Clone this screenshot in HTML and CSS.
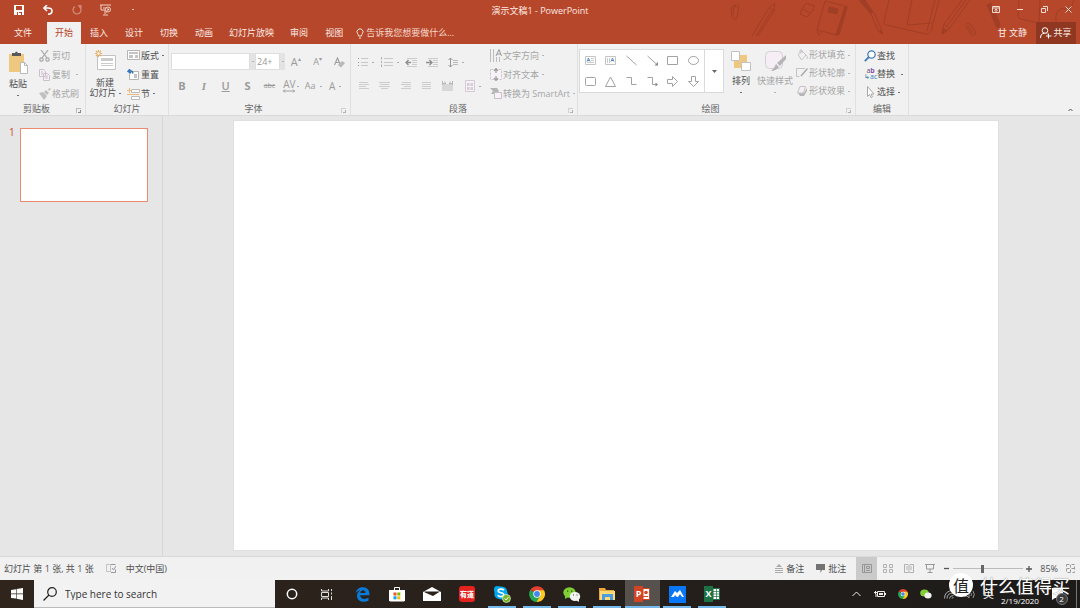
FILE: index.html
```html
<!DOCTYPE html>
<html lang="zh-CN">
<head>
<meta charset="utf-8">
<title>演示文稿1 - PowerPoint</title>
<link rel="stylesheet" href="styles.css">
</head>
<body>
<header class="header">
  <svg class="doodles" width="380" height="44" viewBox="0 0 380 44" fill="none" stroke="#a03e26" stroke-width="1" aria-hidden="true">
    <path d="M31 8l1 9q2 4 5 1l2-12q-3-3-5 0l-1 9M31 8q3-4 6 0"/>
    <path d="M52 36L69 8l6-5-1 8-16 25M56 36L72 10M70 8l4 3"/>
    <path d="M101 11l5-8 8 3-1 5-6 6-7-3zM103 9l7 4"/>
    <path d="M125 1l20 5-8 29-20-5zM145 6l2 1-8 28-2 0M117 30l2 5 3-3"/>
    <path fill="#a03e26" d="M129 7l9 2-1 5-9-2zM145 7l2 0-8 27-3 0zM159 0h6l8 12-2 2zM181 30l2 4-4-2z"/>
    <path d="M171 14l8 18M174 12l8 19"/>
    <path d="M189 0l-5 21q-1 3 2 4l40 9q4 1 5-3l8-31M212 0l-5 25 25-2M235 0l-8 31"/>
    <path d="M244 24l18-24M249 29l21-29M247 26l19-26M244 24l-2 10 7-5z"/>
    <path fill="#a03e26" d="M243 28l-1 6 5-3zM287 5l4-2 9 21-1 4-3-2z"/>
    <path d="M266 24q3-2 5 1l5 8q-2 4-5 1l-5-8M268 26l5 7M319 0l-1 16q0 2 3 3l26 6M340 0l-1 22M366 8q-12 0-10 14M374 0l-5 12"/>
  </svg>
  <div class="titlebar">
    <div class="quick">
      <button class="icon-btn" aria-label="保存"><svg width="10" height="10" viewBox="0 0 10 10"><path fill="#fff" fill-rule="evenodd" d="M0 0h10v10H0zM2 1v4h6V1zM3 7v3h1V7h1v1h2v2h1V7z"/></svg></button>
      <button class="icon-btn" aria-label="撤消"><svg width="10" height="10" viewBox="0 0 10 10" fill="none" stroke="#fff" stroke-width="1.6"><path d="M4 0L1 3l3 3M1 3h4q4 0 4 3t-4 3.2"/></svg></button>
      <button class="icon-btn faded" aria-label="重复"><svg width="10" height="10" viewBox="0 0 10 10" fill="none" stroke="#fff" stroke-width="1.3"><path d="M7 1.500a4 4 0 1 1-4 0M6 0.600h3v3"/></svg></button>
      <button class="icon-btn" aria-label="从头开始放映"><svg width="12" height="12" viewBox="0 0 12 12" fill="none" stroke="#f0cfc5"><path d="M0 1h11M1 1v5h4M3 4h3M5 6v4M3 11h5M6 8h1"/><circle cx="8" cy="5.500" r="2.500"/><path fill="#fff" stroke="none" d="M7.500 4v3l2-1.500z"/></svg></button>
      <button class="icon-btn caret light" aria-label="自定义快速访问工具栏"></button>
    </div>
    <div class="doc-title">演示文稿1 - PowerPoint</div>
    <div class="win">
      <button class="icon-btn" aria-label="功能区显示选项"><svg width="8" height="7" viewBox="0 0 8 7" fill="none" stroke="#f4dad2"><path d="M.500.500h7v6h-7zM1 2h6M4 6V3M2.500 4.500L4 3l1.500 1.500"/></svg></button>
      <button class="icon-btn" aria-label="最小化"><svg width="6" height="7" viewBox="0 0 6 7"><path stroke="#f4dad2" d="M0 3.500h6"/></svg></button>
      <button class="icon-btn" aria-label="还原"><svg width="7" height="7" viewBox="0 0 7 7" fill="none" stroke="#f4dad2"><path d="M.500 2.500h4v4h-4zM2 .500h4.500V5"/></svg></button>
      <button class="icon-btn" aria-label="关闭"><svg width="7" height="7" viewBox="0 0 7 7"><path stroke="#f4dad2" d="M.500.500l6 6M6.500.500l-6 6"/></svg></button>
    </div>
  </div>
  <nav class="tabs">
    <button class="tab file">文件</button>
    <button class="tab active">开始</button>
    <button class="tab">插入</button>
    <button class="tab">设计</button>
    <button class="tab">切换</button>
    <button class="tab">动画</button>
    <button class="tab long">幻灯片放映</button>
    <button class="tab">审阅</button>
    <button class="tab">视图</button>
    <button class="tell"><svg width="8" height="11" viewBox="0 0 8 11" fill="none" stroke="#fbe3dc"><path d="M2.500 8q0-1.500-1-2.500a3 3 0 1 1 5 0q-1 1-1 2.500zM3 10h2"/></svg>告诉我您想要做什么...</button>
    <span class="account">甘 文静</span>
    <button class="share"><svg width="12" height="12" viewBox="0 0 12 12" fill="none" stroke="#fff"><circle cx="5" cy="3.500" r="2.800"/><path d="M.500 11q0-4.500 4-4.700M7 6.500l1 1M8.500 6.500v5M6 9h5.500"/></svg>共享</button>
  </nav>
</header>

<section class="ribbon">
  <div class="group g-clip">
    <div class="body">
      <button class="big paste"><svg width="20" height="23" viewBox="0 0 20 23"><path fill="#edc87e" d="M1 3h15v18H1z"/><path fill="#595959" d="M4 2h3q1-3 3 0h3v3H4z"/><path fill="#fff" stroke="#b8b8b8" d="M12.500 11.500h4l3 3v8h-7z"/><path fill="none" stroke="#b8b8b8" d="M16.500 11.500v3h3"/></svg><span>粘贴</span><i class="caret"></i></button>
      <div class="rows">
        <button class="row off"><svg width="12" height="12" viewBox="0 0 12 12" fill="none" stroke="#a8a8a8" stroke-width="1.200"><path d="M2 0l6 8M9 0L3 8"/><circle cx="2.500" cy="9.500" r="1.700"/><circle cx="8.500" cy="9.500" r="1.700"/></svg>剪切</button>
        <button class="row off"><svg width="12" height="12" viewBox="0 0 12 12" fill="#f5f0f5" stroke="#ccc0cc"><path d="M.500.500h4l2 2v5h-6zM4.500 4.500h4l2 2v5h-6zM2 3h2M2 5h2M6 7h3M6 9h3"/></svg>复制<i class="caret wide"></i></button>
        <button class="row off"><svg width="12" height="12" viewBox="0 0 12 12"><path fill="#bfbfbf" d="M0 5l4-1 4 4-3 4zM5 4l2-2 3 3-2 2zM9 1l2-1 1 1-2 2z"/></svg>格式刷</button>
      </div>
    </div>
    <div class="label launchable">剪贴板<i class="launch"></i></div>
  </div>

  <div class="group g-slides">
    <div class="body">
      <button class="big newslide"><svg width="21" height="20" viewBox="0 0 21 20"><path fill="#fff" stroke="#c2c2c2" d="M2.500 5.500h18v14h-18z"/><path fill="#ccc" d="M6 8h12v3H6z"/><path stroke="#ccc" d="M6 13.500h12M6 15.500h12"/><path stroke="#e9ad62" stroke-width="1.200" d="M3.500 0v7M0 3.500h7M1 1l5 5M6 1L1 6"/><circle cx="3.500" cy="3.500" r="1.200" fill="#fff"/></svg><span>新建<br>幻灯片<i class="caret"></i></span></button>
      <div class="rows">
        <button class="row"><svg width="13" height="11" viewBox="0 0 13 11"><path fill="#fff" stroke="#b5b5b5" d="M.500.500h12v9H.500z"/><path fill="#c4c4c4" d="M2 2h9v2H2zM2 5h4v3H2zM8 5h3v3H8z"/></svg>版式<i class="caret"></i></button>
        <button class="row"><svg width="13" height="11" viewBox="0 0 13 11"><path fill="#fff" stroke="#b5b5b5" d="M2.500 2.500h9v8h-9z"/><path fill="#c4c4c4" d="M7 5h3v4H7z"/><path fill="none" stroke="#3776b8" stroke-width="1.500" d="M3 0L1 2.500 4 4M1 2.500q4-2 5 2"/></svg>重置</button>
        <button class="row"><svg width="13" height="12" viewBox="0 0 13 12"><path fill="#fff" stroke="#bbb" d="M4.500 1.500h8v3h-8zM4.500 8.500h8v3h-8z"/><path stroke="#edb878" d="M0 6.500h12M2.500 0v5M0 2.500h5"/></svg>节<i class="caret"></i></button>
      </div>
    </div>
    <div class="label">幻灯片</div>
  </div>

  <div class="group g-font">
    <div class="body stack">
      <div class="line">
        <input class="combo name" type="text" aria-label="字体"><button class="drop caret" aria-label="选择字体"></button>
        <input class="combo size" type="text" value="24+" aria-label="字号"><button class="drop caret" aria-label="选择字号"></button>
        <div class="cells three">
          <button class="cell fs11" aria-label="增大字号">A<sup>▴</sup></button>
          <button class="cell" aria-label="减小字号">A<sup>▾</sup></button>
          <button class="cell" aria-label="清除格式"><svg width="11" height="11" viewBox="0 0 11 11"><path fill="none" stroke="#a0a0a0" stroke-width="1.200" d="M.500 8L3.500 1l2.500 6M1.500 5.500h4"/><path fill="#b8b8b8" d="M4 8l4-4 3 2-4 4.500z"/></svg></button>
        </div>
      </div>
      <div class="cells eight">
        <button class="cell fs11 b">B</button>
        <button class="cell fs11 i">I</button>
        <button class="cell fs11 u">U</button>
        <button class="cell fs11 b">S</button>
        <button class="cell strike">abc</button>
        <button class="cell spacing" aria-label="字符间距"><span>AV</span><svg width="12" height="4" viewBox="0 0 12 4" fill="none" stroke="#a0a0a0"><path d="M0 2h12M2 .500L.500 2 2 3.500M10 .500L11.500 2 10 3.500"/></svg><i class="caret"></i></button>
        <button class="cell">Aa<i class="caret"></i></button>
        <button class="cell fs10">A<i class="caret"></i></button>
      </div>
    </div>
    <div class="label launchable">字体<i class="launch dim"></i></div>
  </div>

  <div class="group g-para">
    <div class="body">
      <div class="stack">
        <div class="cells para1">
          <button class="cell" aria-label="项目符号"><svg width="10" height="10" viewBox="0 0 10 10"><path stroke="#c8c8c8" d="M3 1.500h7M3 5.500h7M3 8.500h7"/><path fill="#999" d="M0 1h1v1H0zM0 5h1v1H0zM0 8h1v1H0z"/></svg><i class="caret"></i></button>
          <button class="cell" aria-label="编号"><svg width="12" height="10" viewBox="0 0 12 10"><path stroke="#c8c8c8" d="M3 1.500h9M3 5.500h9M3 8.500h9"/><path stroke="#aaa" d="M.500 0v2.500M.500 4v2M.500 7.500V10"/></svg><i class="caret"></i></button>
          <button class="cell" aria-label="减少缩进"><svg width="12" height="9" viewBox="0 0 12 9"><path stroke="#ccc" d="M2 .500h10M7 2.500h5M7 4.500h5M7 6.500h5M2 8.500h10"/><path fill="none" stroke="#909090" stroke-width="1.400" d="M6 4.500H1M3.500 2L1 4.500 3.500 7"/></svg></button>
          <button class="cell" aria-label="增加缩进"><svg width="12" height="9" viewBox="0 0 12 9"><path stroke="#ccc" d="M2 .500h10M7 2.500h5M7 4.500h5M7 6.500h5M2 8.500h10"/><path fill="none" stroke="#909090" stroke-width="1.400" d="M0 4.500h6M3.500 2L6 4.500 3.500 7"/></svg></button>
          <button class="cell" aria-label="行距"><svg width="10" height="11" viewBox="0 0 10 11"><path fill="none" stroke="#999" d="M2.500 1v9M.500 3l2-2 2 2M.500 8l2 2 2-2"/><path stroke="#bbb" d="M5 3.500h5M5 5.500h5M5 7.500h5"/></svg><i class="caret"></i></button>
        </div>
        <div class="cells para2">
          <button class="cell" aria-label="左对齐"><svg width="10" height="8" viewBox="0 0 10 8"><path stroke="#cdcdcd" d="M0 .500h9M0 2.500h10M0 4.500h7M0 6.500h10"/></svg></button>
          <button class="cell" aria-label="居中"><svg width="11" height="8" viewBox="0 0 11 8"><path stroke="#cdcdcd" d="M0 .500h11M1 2.500h9M0 4.500h11M2 6.500h7"/></svg></button>
          <button class="cell" aria-label="右对齐"><svg width="10" height="8" viewBox="0 0 10 8"><path stroke="#cdcdcd" d="M1 .500h9M0 2.500h10M3 4.500h7M0 6.500h10"/></svg></button>
          <button class="cell" aria-label="两端对齐"><svg width="9" height="8" viewBox="0 0 9 8"><path stroke="#cdcdcd" d="M0 .500h9M0 2.500h9M0 4.500h9M0 6.500h9"/></svg></button>
          <button class="cell" aria-label="分散对齐"><svg width="11" height="10" viewBox="0 0 11 10"><path fill="#d8d8d8" d="M0 3h11v7H0z"/><path fill="none" stroke="#b8b8b8" d="M.500 0v4M10.500 0v4M1 2.500h3M7 2.500h3M3 .500v3M8 .500v3"/></svg></button>
          <button class="cell" aria-label="分栏"><svg width="10" height="12" viewBox="0 0 10 12"><path fill="#f7f2f7" stroke="#d3cad3" d="M.500.500h9v11h-9z"/><path fill="#d6cbd6" d="M2 3h2.500v3H2zM5.500 3H8v3H5.500zM2 7h2.500v3H2zM5.500 7H8v3H5.500z"/></svg><i class="caret"></i></button>
        </div>
      </div>
      <div class="rows">
        <button class="row off"><svg width="12" height="13" viewBox="0 0 12 13"><path stroke="#bdbdbd" d="M.500 0v13M3.500 0v13M6.500 8v5M9.500 8v5"/><path fill="none" stroke="#999" d="M6 7l3-6.500L11.500 7M7 5h4"/></svg>文字方向<i class="caret"></i></button>
        <button class="row off"><svg width="12" height="13" viewBox="0 0 12 13"><path fill="#f7f2f7" stroke="#d3cad3" stroke-dasharray="3 1" d="M.500 1.500h11v10H.500z"/><path fill="none" stroke="#999" stroke-width="1.200" d="M6 1v4M6 8v4M4 3l2-2.500L8 3M4 10l2 2.500L8 10"/></svg>对齐文本<i class="caret"></i></button>
        <button class="row off"><svg width="12" height="11" viewBox="0 0 12 11"><path fill="#b5b5b5" d="M0 0h7l2 3-3 3H1l2-3z"/><path fill="#f7f2f7" stroke="#c8bdc8" d="M4.500 4.500h7v6h-7z"/></svg>转换为 SmartArt<i class="caret"></i></button>
      </div>
    </div>
    <div class="label launchable">段落<i class="launch dim"></i></div>
  </div>

  <div class="group g-draw">
    <div class="body">
      <div class="gallery">
        <div class="shapes">
          <button class="cell" aria-label="文本框"><svg width="11" height="11" viewBox="0 0 11 11"><path fill="#fff" stroke="#c4c4c4" d="M.500 1.500h10v8H.500z"/><path stroke="#5b8bc4" d="M2 6.500L3.500 3 5 6.500M2.500 5.500h2" fill="none"/><path stroke="#ccc" d="M6 3.500h3M6 5.500h3M2 7.500h7"/></svg></button>
          <button class="cell" aria-label="竖排文本框"><svg width="11" height="11" viewBox="0 0 11 11"><path fill="#fff" stroke="#c4c4c4" d="M.500 1.500h10v8H.500z"/><path stroke="#ccc" d="M2.500 3v5M4.500 3v5"/><path stroke="#5b8bc4" d="M6 6.500L7.500 3 9 6.500M6.500 5.500h2" fill="none"/></svg></button>
          <button class="cell" aria-label="直线"><svg width="11" height="11" viewBox="0 0 11 11"><path stroke="#a2a2a2" d="M.500 1l10 9"/></svg></button>
          <button class="cell" aria-label="箭头"><svg width="11" height="11" viewBox="0 0 11 11" fill="none" stroke="#a2a2a2"><path d="M.500 1l10 9"/><path fill="#888" stroke="none" d="M11 7v3.500H7.500z"/></svg></button>
          <button class="cell" aria-label="矩形"><svg width="11" height="11" viewBox="0 0 11 11" fill="none" stroke="#a2a2a2"><path d="M.500 1.500h10v8H.500z"/></svg></button>
          <button class="cell" aria-label="椭圆"><svg width="11" height="11" viewBox="0 0 11 11" fill="none" stroke="#a2a2a2"><ellipse cx="5.500" cy="5.500" rx="5" ry="4"/></svg></button>
          <button class="cell" aria-label="圆角矩形"><svg width="11" height="11" viewBox="0 0 11 11" fill="none" stroke="#a2a2a2"><rect x=".5" y="1.500" width="10" height="8" rx="1"/></svg></button>
          <button class="cell" aria-label="三角形"><svg width="11" height="11" viewBox="0 0 11 11" fill="none" stroke="#a2a2a2"><path d="M5.500 1l5 9.500H.500z"/></svg></button>
          <button class="cell" aria-label="肘形连接符"><svg width="11" height="11" viewBox="0 0 11 11" fill="none" stroke="#a2a2a2"><path d="M.500 1.500h5v7h5"/></svg></button>
          <button class="cell" aria-label="肘形箭头"><svg width="11" height="11" viewBox="0 0 11 11" fill="none" stroke="#a2a2a2"><path d="M.500 1.500h5v7h5"/><path fill="#888" stroke="none" d="M8.500 6.500L11 8.500l-2.500 2z"/></svg></button>
          <button class="cell" aria-label="右箭头"><svg width="11" height="11" viewBox="0 0 11 11" fill="none" stroke="#a2a2a2"><path d="M.500 3.500h5v-3l5 5-5 5v-3h-5z"/></svg></button>
          <button class="cell" aria-label="下箭头"><svg width="11" height="11" viewBox="0 0 11 11" fill="none" stroke="#a2a2a2"><path d="M3.500.500v5h-3l5 5 5-5h-3v-5z"/></svg></button>
        </div>
        <button class="more" aria-label="其他形状"><svg width="5" height="3" viewBox="0 0 5 3"><path fill="#666" d="M0 0h5L2.500 3z"/></svg></button>
      </div>
      <button class="big arrange"><svg width="20" height="20" viewBox="0 0 20 20"><path fill="#edc87e" d="M9 4h7v7H9zM3 10h8v7H3z"/><path fill="#fff" stroke="#c2c2c2" d="M.500.500h8v9h-8zM10.500 11.500h9v8h-9z"/></svg><span>排列</span><i class="caret"></i></button>
      <button class="big quickstyle off"><svg width="22" height="22" viewBox="0 0 22 22"><rect x="1.500" y="1.500" width="17" height="17" rx="4" fill="#f5eff5" stroke="#d6cdd6"/><path fill="#b5b5b5" d="M22 5v4l-6 7-3-3zM12 14l3 3q-3 4-8 4 3-2 5-7z"/></svg><span>快速样式</span><i class="caret"></i></button>
      <div class="rows tight">
        <button class="row off"><svg width="12" height="12" viewBox="0 0 12 12" fill="none" stroke="#cac2ca"><path d="M2 5.500L6 2l4 4-4.500 5zM4 5V1h2v3M10 6q2 1 1 4"/></svg>形状填充<i class="caret"></i></button>
        <button class="row off"><svg width="12" height="12" viewBox="0 0 12 12" fill="none"><path stroke="#c4c4c4" d="M9 1.500H.500v8h3"/><path stroke="#aaa" stroke-width="1.500" d="M11.500 1.500L5 9"/></svg>形状轮廓<i class="caret"></i></button>
        <button class="row off"><svg width="12" height="12" viewBox="0 0 12 12"><path fill="#b5b5b5" d="M2 8l2 3h4l3-5V3L8 8z"/><path fill="#f5eff5" stroke="#c8c0c8" d="M4 1.500h5.500l-2 6.500H1.500z"/></svg>形状效果<i class="caret"></i></button>
      </div>
    </div>
    <div class="label launchable">绘图<i class="launch dim"></i></div>
  </div>

  <div class="group g-edit">
    <div class="body">
      <div class="rows tight">
        <button class="row"><svg width="12" height="12" viewBox="0 0 12 12" fill="none" stroke="#3d7ab8"><circle cx="7.500" cy="4.500" r="3.700" stroke-width="1.200" fill="#fff"/><path stroke-width="1.800" d="M4.800 7.200L.800 11.200"/></svg>查找</button>
        <button class="row"><span class="ab" aria-hidden="true"><span>a<b>b</b></span><span><em>↳</em>ac</span></span>替换<i class="caret wide"></i></button>
        <button class="row"><svg width="12" height="12" viewBox="0 0 12 12"><path fill="#fff" stroke="#aaa" d="M3.500.500v10l2-2 1.500 3 1.500-.700L7 8h3z"/></svg>选择<i class="caret"></i></button>
      </div>
    </div>
    <div class="label">编辑</div>
  </div>
  <button class="collapse" aria-label="折叠功能区"><svg width="5" height="4" viewBox="0 0 5 4"><path fill="none" stroke="#555" d="M.500 3l2-2 2 2"/></svg></button>
</section>

<main class="work">
  <aside class="thumbs"><span class="num">1</span><button class="thumb" aria-label="幻灯片 1"></button></aside>
  <section class="stage"><div class="slide"></div></section>
</main>

<footer class="status">
  <span>幻灯片 第 1 张, 共 1 张</span>
  <button class="icon-btn spell" aria-label="拼写检查"><svg width="10" height="9" viewBox="0 0 10 9" fill="none" stroke="#999"><path stroke-dasharray="1 1" d="M.500.500h4v7h-4z"/><path d="M5 .500h4.500M5 8.500h4.500v-3M6 4l1.500 2L10 2"/></svg></button>
  <button class="plain">中文(中国)</button>
  <button class="plain notes"><svg width="8" height="9" viewBox="0 0 8 9"><path fill="#aaa" d="M4 0l3 3H1z"/><path stroke="#aaa" d="M0 4.500h8M0 6.500h8M0 8.500h8"/></svg>备注</button>
  <button class="plain comments"><svg width="9" height="9" viewBox="0 0 9 9"><path fill="#737373" d="M0 0h9v6H6L4.500 9V6H0z"/></svg>批注</button>
  <div class="views">
    <button class="view on" aria-label="普通视图"><svg width="10" height="9" viewBox="0 0 10 9" fill="none" stroke="#969696"><path d="M.500.500h9v8h-9zM2.500 0v9M4.500 2.500h3v2h-3zM4 6.500h4"/></svg></button>
    <button class="view" aria-label="幻灯片浏览"><svg width="10" height="9" viewBox="0 0 10 9" fill="none" stroke="#b0b0b0"><path d="M.500.500h3v3h-3zM6.500.500h3v3h-3zM.500 5.500h3v3h-3zM6.500 5.500h3v3h-3z"/></svg></button>
    <button class="view" aria-label="阅读视图"><svg width="10" height="9" viewBox="0 0 10 9" fill="none" stroke="#b0b0b0"><path d="M.500.500h3.500l1 1 1-1h3.500v8H6l-1 .500-1-.500H.500zM5 1v7M2 3h2M2 5h2M6 3h2M6 5h2"/></svg></button>
    <button class="view" aria-label="幻灯片放映"><svg width="10" height="9" viewBox="0 0 10 9" fill="none" stroke="#999"><path d="M0 .500h10M1.500 1v4h7V1M5 5v3M2.500 8.500h5"/></svg></button>
  </div>
  <div class="zoom">
    <button class="icon-btn" aria-label="缩小"><svg width="5" height="5" viewBox="0 0 5 5"><path stroke="#555" stroke-width="1.300" d="M0 2.500h5"/></svg></button>
    <input type="range" min="10" max="200" value="88" aria-label="显示比例">
    <button class="icon-btn" aria-label="放大"><svg width="6" height="6" viewBox="0 0 6 6"><path stroke="#555" stroke-width="1.300" d="M0 3h6M3 0v6"/></svg></button>
    <button class="plain pct">85%</button>
    <button class="icon-btn" aria-label="适应窗口"><svg width="9" height="9" viewBox="0 0 9 9" fill="none" stroke="#999"><path stroke-dasharray="3 2" d="M.500.500h8v8h-8z"/><path d="M4.500 1v2.500M4.500 5.500V8M1 4.500h2.500M5.500 4.500H8"/></svg></button>
  </div>
</footer>

<footer class="taskbar">
  <button class="start" aria-label="开始菜单"><svg width="12" height="12" viewBox="0 0 12 12" fill="#fff"><path d="M0 2l5-.800v4.300H0zM5.600 1.100L12 0v5.500H5.600zM0 6.200h5v4.400L0 9.900zM5.600 6.200H12V12l-6.400-1.200z"/></svg></button>
  <label class="search"><svg width="14" height="14" viewBox="0 0 14 14" fill="none" stroke="#222" stroke-width="1.200"><circle cx="9" cy="5" r="4.300"/><path d="M6 8L.500 13.500"/></svg><input type="text" placeholder="Type here to search" aria-label="Search"></label>
  <div class="apps">
    <button class="app" aria-label="Cortana"><svg width="12" height="12" viewBox="0 0 12 12"><circle cx="6" cy="6" r="4.700" fill="none" stroke="#fff" stroke-width="1.500"/></svg></button>
    <button class="app" aria-label="Task View"><svg width="12" height="11" viewBox="0 0 12 11" fill="none" stroke="#ddd"><path d="M.500 0v2h7V0M.500 3.500h7v4h-7zM.500 11V9h7v2M10.500 0v2M10.500 3.500v2M10.500 7v4"/></svg></button>
    <button class="app" aria-label="Edge"><svg width="15" height="15" viewBox="0 0 15 15"><path fill="#0a7bd9" d="M.500 6.500C1.500 2 4.500.300 8 .300c4.500 0 6.700 3.200 6.500 8H5.200c.300 4.200 5 4.400 8.300 2.500v3c-5 2.300-11.500.800-11.500-5 0-2.800 1.400-4.600 3.500-5.600C3.500 3.300 1.500 4.500.500 6.500zM5.300 6h5.200C10.500 2.300 5.600 2.500 5.300 6z"/></svg></button>
    <button class="app" aria-label="Store"><svg width="16" height="16" viewBox="0 0 16 16"><path fill="none" stroke="#fff" d="M5.500 4V1.500h5V4"/><path fill="#fff" d="M0 4h16v10.500l-1 1H1l-1-1z"/><path fill="#f25022" d="M4.500 6.500h3v3h-3z"/><path fill="#7fba00" d="M8.300 6.500h3v3h-3z"/><path fill="#00a4ef" d="M4.500 10.300h3v3h-3z"/><path fill="#ffb900" d="M8.300 10.300h3v3h-3z"/></svg></button>
    <button class="app" aria-label="Mail"><svg width="18" height="14" viewBox="0 0 18 14"><path fill="#fff" d="M0 5l9-5 9 5v9H0z"/><path fill="#28201a" d="M1 4.500h16L10 9 2 5.500z"/></svg></button>
    <button class="app" aria-label="有道"><span class="youdao">有道</span></button>
    <button class="app run" aria-label="Skype"><svg width="18" height="18" viewBox="0 0 18 18"><path fill="#00a8ee" d="M1 4q0-3 3.500-3 1.500 0 2.500.600 7-.800 7.500 6.400 1.500 3.500-.500 5.500-2 2-5 1C2.500 14 1 12 1.500 7.500 1 6 1 5 1 4z"/><path fill="none" stroke="#fff" stroke-width="1.700" d="M11 5.300C9.500 3.500 5.200 3.800 5.200 6S11 7.300 10.800 9.700c-.200 2.300-4.800 2.500-6 .400"/><circle cx="13.500" cy="13.500" r="4" fill="#75b51e" stroke="#fff" stroke-width=".600"/><path fill="none" stroke="#fff" d="M11.500 13.500l1.500 1.500 2.500-3"/></svg></button>
    <button class="app run" aria-label="Chrome"><svg width="16" height="16" viewBox="0 0 16 16"><path fill="#e4402f" d="M8 8L1.200 4A8 8 0 0 1 15 4.200z"/><path fill="#fcc91c" d="M8 8V4.200h7A8 8 0 0 1 7.500 16z"/><path fill="#27a550" d="M8 8l3.300 2L7.500 16A8 8 0 0 1 1.200 4z"/><circle cx="8" cy="8" r="3.700" fill="#fff"/><circle cx="8" cy="8" r="2.900" fill="#4585ee"/></svg></button>
    <button class="app run" aria-label="微信"><svg width="18" height="15" viewBox="0 0 18 15"><ellipse cx="6.500" cy="5.500" rx="6.200" ry="5.200" fill="#82cf35"/><path fill="#82cf35" d="M2 9l0 3 3-2z"/><ellipse cx="12" cy="9.500" rx="5.200" ry="4.500" fill="#f2f2f2"/><path fill="#f2f2f2" d="M13 13l3 2v-3z"/><path fill="#315818" d="M4 3.500h1.300v1.300H4zM8 3.500h1.300v1.300H8zM10 7.500h1v1h-1zM13.500 7.500h1v1h-1z"/></svg></button>
    <button class="app run" aria-label="文件资源管理器"><svg width="16" height="14" viewBox="0 0 16 14"><path fill="#e8a93a" d="M0 1h6l1 2h8v10H0z"/><path fill="#ffd875" d="M1 4h15v9H1z"/><path fill="#4a9ee0" d="M3 7h11v6h-3v-3H6v3H3z"/></svg></button>
    <button class="app run current" aria-label="PowerPoint"><span class="office ppt"><b>P</b><svg width="7" height="12" viewBox="0 0 7 12"><path fill="#fff" stroke="#d14424" d="M0 .500h6.500v11H0z"/><path stroke="#d14424" d="M0 8.500h5"/><circle cx="3" cy="4.500" r="1.800" fill="#d14424"/></svg></span></button>
    <button class="app run" aria-label="腾讯会议"><svg width="17" height="17" viewBox="0 0 17 17"><path fill="#0878f9" d="M0 0h17v17H0z"/><path fill="#fff" d="M2 11l4-6 2 2 3-3 4 7-2 0-2-3-2 3H8L6 9l-1 2z"/></svg></button>
    <button class="app run" aria-label="Excel"><span class="office xls"><b>X</b><svg width="7" height="12" viewBox="0 0 7 12"><path fill="#fff" stroke="#1e7145" d="M0 .500h6.500v11H0z"/><path stroke="#1e7145" stroke-width=".7" d="M0 3.500h6M0 6h6M0 8.500h6M3.500 1v10"/></svg></span></button>
  </div>
  <div class="tray">
    <button class="t" aria-label="显示隐藏的图标"><svg width="9" height="6" viewBox="0 0 9 6"><path fill="none" stroke="#eee" d="M.500 5l4-4 4 4"/></svg></button>
    <button class="t" aria-label="电池"><svg width="12" height="8" viewBox="0 0 12 8"><path fill="none" stroke="#eee" d="M3.500 1.500h7v5h-7zM0 2.500h3M1.500 1v3M2 4v3"/><path fill="#eee" d="M5 3h4v2H5zM11 3h1v2h-1z"/></svg></button>
    <button class="t" aria-label="Chrome"><svg width="10" height="10" viewBox="0 0 16 16"><path fill="#e4402f" d="M8 8L1.200 4A8 8 0 0 1 15 4.200z"/><path fill="#fcc91c" d="M8 8V4.200h7A8 8 0 0 1 7.500 16z"/><path fill="#27a550" d="M8 8l3.300 2L7.500 16A8 8 0 0 1 1.200 4z"/><circle cx="8" cy="8" r="3.700" fill="#fff"/><circle cx="8" cy="8" r="2.900" fill="#4585ee"/></svg></button>
    <button class="t" aria-label="微信"><svg width="12" height="10" viewBox="0 0 12 10"><ellipse cx="4.500" cy="4" rx="4.300" ry="3.600" fill="#82cf35"/><ellipse cx="8" cy="6.500" rx="3.600" ry="3" fill="#f2f2f2"/></svg></button>
    <button class="t" aria-label="无线网络"><svg width="10" height="9" viewBox="0 0 10 9" fill="none" stroke="#aaa"><path d="M.500 8.500q0-8 9-8M3 8.500Q3 3 9.500 3M5.500 8.500q0-3 4-3M8 8.500q0-1 1.500-1"/></svg></button>
    <button class="t vol" aria-label="音量"><svg width="10" height="9" viewBox="0 0 10 9" fill="none" stroke="#999"><path d="M0 3h2l2-2v7L2 6H0M6 3q1 1.500 0 3M8 1q2.500 3.500 0 7"/></svg></button>
    <button class="t ime">英</button>
    <button class="t date">2/19/2020</button>
    <button class="t notif" aria-label="通知"><svg width="18" height="18" viewBox="0 0 18 18"><path fill="#fff" d="M1 1h11v10H4L1 13z"/><circle cx="11" cy="12" r="5.500" fill="#3b3b3b" stroke="#777"/></svg><span>2</span></button>
    <button class="desk" aria-label="显示桌面"></button>
  </div>
</footer>
<div class="mark"><span class="disc">值</span><span>什么值得买</span></div>
</body>
</html>
```
FILE: styles.css
```css
* { box-sizing: border-box; }
body {
  margin: 0;
  height: 100vh;
  display: flex;
  flex-direction: column;
  overflow: hidden;
  position: relative;
  background: #e6e6e6;
  color: #505050;
  font: 9px/12px "Open Sans", "Noto Sans CJK SC", sans-serif;
}
button, input { font: inherit; color: inherit; }
button {
  padding: 0;
  border: 0;
  background: none;
  display: flex;
  align-items: center;
  justify-content: center;
  white-space: nowrap;
}
svg { flex: none; display: block; }

.caret { flex: none; display: flex; align-items: center; justify-content: center; margin-left: 2px; }
.caret::before { content: ""; width: 2px; height: 1px; background: currentColor; opacity: .8; }
.caret.wide { margin-left: 5px; }

/* Header */
.header { position: relative; flex: none; background: #b7472a; color: #fbeae5; }
.doodles { position: absolute; right: 0; top: 0; }
.titlebar { position: relative; display: grid; grid-template-columns: 1fr auto 1fr; height: 22px; align-items: center; padding-bottom: 3px; }
.quick { display: flex; padding-left: 4px; }
.quick .icon-btn { width: 29px; height: 16px; margin: 0; }
.quick .icon-btn.light { width: 26px; }
.faded { opacity: .35; }
.doc-title { padding-top: 3px; }
.win { display: flex; justify-content: flex-end; }
.win .icon-btn { width: 24px; }
.tabs { position: relative; display: flex; height: 22px; gap: 1px; }
.tab { padding: 0 8px; }
.tab.long { padding: 0 7px; }
.tab.file { padding: 0 14px; }
.active { background: #f1f1f1; color: #b7472a; }
.tell { gap: 2px; padding-left: 4px; color: #f6d8ce; }
.account { margin-left: auto; align-self: center; padding-right: 8px; }
.share { width: 40px; gap: 1px; margin-right: 4px; background: #8f3721; }

/* Ribbon */
.ribbon { flex: none; display: flex; height: 72px; background: #f1f1f1; border-bottom: 1px solid #dadada; }
.group { display: flex; flex-direction: column; padding-top: 2px; border-right: 1px solid #e0e0e0; }
.body { display: flex; height: 57px; }
.label { position: relative; display: flex; justify-content: center; height: 12px; color: #666; }
.launchable { padding-right: 12px; }
.launch { position: absolute; right: 4px; bottom: 2px; width: 5px; height: 5px; border: solid #bbb; border-width: 1px 0 0 1px; }
.launch::after { content: ""; position: absolute; right: 0; bottom: 0; width: 2px; height: 2px; border: solid #888; border-width: 0 1px 1px 0; }
.dim { opacity: .6; }
.big { flex-direction: column; justify-content: flex-start; line-height: 10px; }
.big > .caret { height: 8px; margin: 0; }
.big span { display: block; padding: 4px 0; }
.big span .caret { display: inline-flex; vertical-align: middle; }
.rows { display: grid; grid-template-rows: repeat(3, 19px); justify-items: start; }
.rows.tight { grid-template-rows: repeat(3, 18px); }
.row { gap: 1px; }
.off { color: #a6a6a6; }
.cell { color: #9b9b9b; height: 18px; }
.cell .caret { margin-left: 4px; }
.cells { display: grid; }
.stack { display: flex; flex-direction: column; gap: 7px; padding-top: 7px; }

.g-clip { width: 86px; }
.paste { width: 36px; padding-top: 5px; }
.paste span { padding: 5px 0 2px; }
.g-clip .rows { padding-left: 3px; }
.g-slides { width: 83px; }
.newslide { width: 38px; padding-top: 4px; }
.newslide span { padding-top: 8px; }
.g-slides .rows { padding-left: 3px; }

.g-font { width: 182px; }
.g-font .body { padding-left: 2px; }
.line { display: flex; height: 17px; }
.combo { min-width: 0; margin: 0; padding: 0 1px; border: 1px solid #dedede; background: #fff; color: #999; outline: 0; }
.name { width: 79px; }
.size { width: 25px; }
.drop { width: 5px; margin: 0; background: #e3e3e3; color: #aaa; }
.three { flex: 1; grid-template-columns: repeat(3, 1fr); }
.eight { grid-template-columns: repeat(8, 1fr); padding-right: 4px; }
.cell sup { font-size: 6px; line-height: 6px; margin-bottom: 7px; }
.fs11 { font-size: 11px; }
.fs10 { font-size: 10px; }
.b { font-weight: 700; }
.i { font-style: italic; font-family: "Liberation Serif", serif; font-weight: 700; }
.u { text-decoration: underline; font-weight: 600; }
.strike { text-decoration: line-through; font-size: 7px; }
.spacing { display: grid; grid-template-columns: auto auto; justify-content: center; align-content: center; justify-items: center; line-height: 10px; font-size: 10px; }
.spacing .caret { grid-area: 1 / 2 / 3 / 3; margin-left: 2px; }

.g-para { width: 227px; }
.g-para .body { padding-left: 2px; }
.para1 { grid-template-columns: 25px 23px 20px 22px 26px; height: 17px; }
.para2 { grid-template-columns: repeat(5, 21px) 29px; }
.g-para .rows { padding-left: 3px; }

.g-draw { width: 278px; }
.gallery { display: flex; width: 145px; height: 44px; margin: 3px 0 0 1px; background: #fff; border: 1px solid #dadada; }
.shapes { flex: 1; display: grid; grid-template-columns: repeat(6, 1fr); grid-template-rows: repeat(2, 1fr); align-items: center; }
.more { width: 19px; border-left: 1px solid #dadada; }
.arrange { width: 34px; padding-top: 5px; }
.arrange span { padding: 5px 0 2px; }
.quickstyle { width: 34px; padding-top: 4px; }
.quickstyle span { padding-bottom: 2px; }
.g-draw .rows { padding-left: 4px; }
.g-edit { width: 53px; }
.g-edit .rows { padding: 1px 0 0 8px; }
.ab { display: grid; width: 12px; font-size: 7px; line-height: 6px; color: #555; }
.ab b { color: #9251b5; }
.ab em { color: #3d7ab8; font-style: normal; }
.ab span + span { color: #3d7ab8; }
.collapse { margin: auto 7px 3px auto; }

/* Workspace */
.work { flex: 1; display: flex; min-height: 0; }
.thumbs { width: 163px; display: flex; align-items: flex-start; gap: 5px; padding: 12px 14px 0 9px; border-right: 1px solid #d6d6d6; }
.num { color: #d24726; font-size: 10px; line-height: 9px; }
.thumb { flex: 1; aspect-ratio: 129 / 74; background: #fff; border: 1px solid #ec8a70; }
.stage { flex: 1; display: flex; padding: 4px 81px 5px 70px; }
.slide { flex: 1; background: #fff; border: 1px solid #e0e0e0; }

/* Status bar */
.status { flex: none; display: flex; align-items: center; height: 24px; padding: 0 5px 0 4px; background: #f1f1f1; border-top: 1px solid #d9d9d9; }
.spell { margin: 0 10px 0 12px; }
.plain { gap: 3px; }
.notes { margin-left: auto; }
.comments { margin-left: 12px; }
.views { display: flex; align-self: stretch; margin-left: 10px; }
.view { width: 21px; }
.on { background: #cacaca; }
.zoom { display: flex; align-items: center; margin-left: 4px; }
.zoom input { appearance: none; width: 70px; height: 9px; margin: 0 3px 0 4px; background: linear-gradient(#bbb, #bbb) center / 100% 1px no-repeat; }
.zoom input::-webkit-slider-thumb { appearance: none; width: 3px; height: 8px; background: #666; }
.pct { margin: 0 8px; }

/* Taskbar */
.taskbar { flex: none; display: flex; height: 28px; background: linear-gradient(90deg, #30251c, #251f1b 60%, #1c1b1a); color: #fff; }
.start { width: 34px; }
.search { display: flex; align-items: center; width: 241px; padding-left: 9px; gap: 8px; background: #f2f2f2; border-bottom: 1px solid #bbb; }
.search input { flex: 1; min-width: 0; padding: 0; border: 0; outline: 0; background: none; font-size: 10px; color: #333; }
.search input::placeholder { color: #333; opacity: 1; }
.apps { display: flex; }
.app { position: relative; width: 35px; padding-right: 1px; }
.run::after { content: ""; position: absolute; left: 3px; right: 4px; bottom: 0; height: 2px; background: #76b9ed; }
.current { background: #57514d; }
.current::after { left: 0; right: 0; }
.youdao { width: 16px; height: 16px; border-radius: 3px; background: #e4231f; font: 900 7px/16px "Noto Sans CJK SC", sans-serif; }
.office { display: flex; align-items: center; }
.office b { width: 9px; font-size: 9px; line-height: 16px; }
.ppt b { background: #d14424; }
.xls b { background: #1e7145; }
.tray { display: flex; margin-left: auto; }
.t { width: 23px; }
.vol { width: 20px; }
.ime { width: 17px; font-size: 11px; }
.date { width: 46px; font-size: 8px; line-height: 10px; align-items: flex-end; padding-bottom: 2px; }
.notif { display: grid; place-items: center; width: 33px; padding-top: 3px; }
.notif svg, .notif span { grid-area: 1 / 1; }
.notif span { font-size: 8px; padding: 6px 0 0 4px; }
.desk { width: 4px; border-left: 1px solid #777; }

/* Watermark */
.mark { position: absolute; right: 10px; bottom: 11px; display: flex; align-items: center; gap: 7px; color: #fff; font: 400 18px/18px "Noto Sans CJK SC", sans-serif; pointer-events: none; text-shadow: 0 0 1px #555; }
.disc { width: 24px; height: 24px; border-radius: 50%; background: #fff; color: #222; font-size: 16px; line-height: 24px; text-align: center; text-shadow: none; }
```
